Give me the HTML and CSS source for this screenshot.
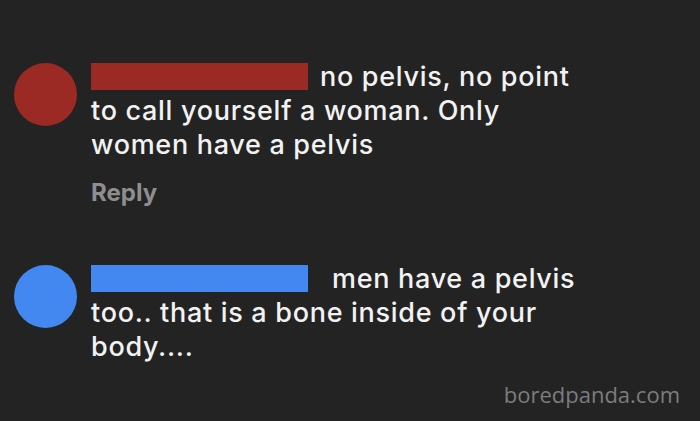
FILE: index.html
```html
<!DOCTYPE html>
<html lang="en">
<head>
<meta charset="utf-8">
<title>Comments</title>
<link rel="stylesheet" href="styles.css">
</head>
<body>
<main class="thread">
  <article class="comment">
    <div class="avatar avatar--red"></div>
    <div class="body">
      <p class="text"><span class="name name--red"></span>no pelvis, no point<br>to call yourself a woman. Only<br>women have a pelvis</p>
      <div class="reply">Reply</div>
    </div>
  </article>
  <article class="comment comment--second">
    <div class="avatar avatar--blue"></div>
    <div class="body">
      <p class="text"><span class="name name--blue"></span>men have a pelvis<br>too.. that is a bone inside of your<br>body....</p>
    </div>
  </article>
  <footer class="watermark">boredpanda.com</footer>
</main>
</body>
</html>
```

FILE: styles.css
```css
html, body {
  margin: 0;
  padding: 0;
}
body {
  background: #232323;
  width: 700px;
  height: 421px;
  overflow: hidden;
}
.thread {
  display: flex;
  flex-direction: column;
  padding: 60px 0 0 14px;
}
.comment {
  display: flex;
  gap: 14px;
  align-items: flex-start;
}
.comment--second {
  margin-top: 52px;
}
.avatar {
  width: 63px;
  height: 63px;
  border-radius: 50%;
  margin-top: 3px;
  flex: none;
}
.avatar--red { background: #9b2a24; }
.avatar--blue { background: #4388f0; }
.body {
  display: flex;
  flex-direction: column;
}
.text {
  margin: 0;
  font-family: Inter, "Liberation Sans", sans-serif;
  font-weight: 500;
  font-size: 27px;
  line-height: 34px;
  letter-spacing: 0.7px;
  color: #f2f2f2;
  white-space: nowrap;
}
.name {
  display: inline-block;
  width: 217px;
  height: 27px;
  vertical-align: -4px;
  margin-right: 12px;
}
.name--red { background: #9b2a24; }
.name--blue { background: #4388f0; margin-right: 24px; }
.reply {
  margin-top: 14px;
  font-family: Inter, "Liberation Sans", sans-serif;
  font-weight: 700;
  font-size: 24px;
  line-height: 34px;
  color: #8e8e8e;
}
.watermark {
  margin-top: 15px;
  align-self: flex-end;
  padding-right: 20px;
  font-family: "Open Sans", "DejaVu Sans", sans-serif;
  font-size: 22px;
  line-height: 30px;
  color: #7c7c7c;
}
```
